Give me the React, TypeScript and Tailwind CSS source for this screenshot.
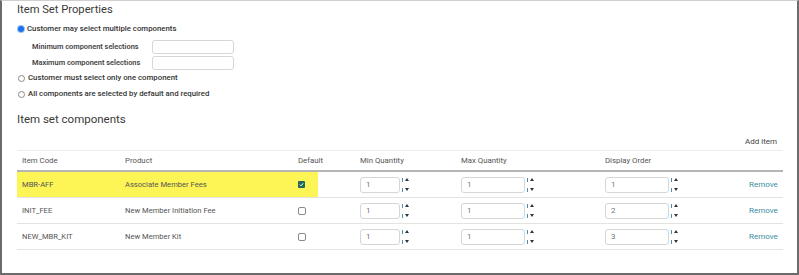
import React from "react";

const rows = [
  { code: "MBR-AFF", product: "Associate Member Fees", checked: true, min: "1", max: "1", order: "1" },
  { code: "INIT_FEE", product: "New Member Initiation Fee", checked: false, min: "1", max: "1", order: "2" },
  { code: "NEW_MBR_KIT", product: "New Member Kit", checked: false, min: "1", max: "1", order: "3" },
];

const cols = "grid grid-cols-[103px_173px_62px_101px_144px_144px_39px]";

function Radio({ on }: { on?: boolean }) {
  return on ? (
    <span className="w-[6px] h-[6px] rounded-full bg-[#1a73e8] ring-1 ring-[#9cc2f5] shrink-0" />
  ) : (
    <span className="w-[7px] h-[7px] rounded-full border border-[#888] bg-white shrink-0" />
  );
}

function Spin({ value, w }: { value: string; w: string }) {
  return (
    <div className="flex items-center gap-[2px]">
      <div className={`${w} h-[16px] border border-[#d6d6d6] rounded-[3px] bg-white flex items-center pl-[5px] text-[8px] text-[#777]`}>
        {value}
      </div>
      <div className="flex flex-col justify-between h-[16px] py-[1px]">
        <div className="flex items-center gap-[2px]">
          <span className="w-px h-[4px] bg-[#4a8fb0]" />
          <span className="w-0 h-0 border-l-[2px] border-r-[2px] border-b-[3px] border-l-transparent border-r-transparent border-b-[#333]" />
        </div>
        <div className="flex items-center gap-[2px]">
          <span className="w-px h-[4px] bg-[#4a8fb0]" />
          <span className="w-0 h-0 border-l-[2px] border-r-[2px] border-t-[3px] border-l-transparent border-r-transparent border-t-[#333]" />
        </div>
      </div>
    </div>
  );
}

export default function App() {
  return (
    <div
      className="w-[799px] h-[275px] bg-white border-l-2 border-r-2 border-b-2 border-t border-l-[#6b6b6b] border-r-[#6b6b6b] border-b-[#6b6b6b] border-t-[#cfcfcf] overflow-hidden text-[#333]"
      style={{ fontFamily: "Roboto, 'Noto Sans', sans-serif" }}
    >
      <div className="pl-[15px] pr-[14px]">
        {/* properties */}
        <h2 className="h-[18px] text-[11.2px] leading-[18px] text-[#3a3a3a] whitespace-nowrap">Item Set Properties</h2>
        <div className="mt-[2px] flex items-center gap-[3px] text-[7.8px] font-medium h-[16px] pl-[1px] whitespace-nowrap">
          <Radio on />
          <span>Customer may select multiple components</span>
        </div>
        <div className="pl-[15px] mt-[3px] flex flex-col gap-[2px]">
          <div className="flex items-center">
            <span className="w-[120px] text-[7.4px] font-semibold text-[#444] whitespace-nowrap">Minimum component selections</span>
            <div className="w-[82px] h-[14px] border border-[#d6d6d6] rounded-[3px]" />
          </div>
          <div className="flex items-center">
            <span className="w-[120px] text-[7.4px] font-semibold text-[#444] whitespace-nowrap">Maximum component selections</span>
            <div className="w-[82px] h-[14px] border border-[#d6d6d6] rounded-[3px]" />
          </div>
        </div>
        <div className="flex items-center gap-[3px] text-[7.8px] font-medium h-[16px] pl-[1px] whitespace-nowrap">
          <Radio />
          <span>Customer must select only one component</span>
        </div>
        <div className="flex items-center gap-[3px] text-[7.8px] font-medium h-[16px] pl-[1px] whitespace-nowrap">
          <Radio />
          <span>All components are selected by default and required</span>
        </div>

        {/* components */}
        <h3 className="mt-[8px] h-[18px] text-[11.5px] leading-[18px] text-[#3a3a3a] whitespace-nowrap">Item set components</h3>
        <div className="flex justify-end items-center pr-[6px] mt-[7px] h-[14px] text-[8px] text-[#444]">Add item</div>

        <div className="mt-[1px] w-[766px] border-t border-[#ececec] text-[7.6px] whitespace-nowrap">
          <div className={`${cols} h-[21px] items-center text-[#555] text-[7.8px] border-b-2 border-[#b5b5b5]`}>
            <span className="pl-[5px]">Item Code</span>
            <span className="pl-[5px]">Product</span>
            <span className="pl-[5px]">Default</span>
            <span className="pl-[5px]">Min Quantity</span>
            <span className="pl-[5px]">Max Quantity</span>
            <span className="pl-[5px]">Display Order</span>
            <span />
          </div>
          {rows.map((r, i) => (
            <div
              key={r.code}
              className={`${cols} h-[26px] items-center border-b border-[#e3e3e3] text-[#555] ${
                i === 0 ? "bg-[linear-gradient(to_right,#fdf456_301px,transparent_301px)]" : ""
              }`}
            >
              <span className="pl-[5px]">{r.code}</span>
              <span className="pl-[5px]">{r.product}</span>
              <span className="pl-[5px] flex">
                {r.checked ? (
                  <span className="w-[7px] h-[7px] rounded-[1px] bg-[#1f6b57] flex items-center justify-center">
                    <svg width="5" height="5" viewBox="0 0 6 6">
                      <path d="M1 3.2 L2.4 4.6 L5 1.6" stroke="#fff" strokeWidth="1.2" fill="none" />
                    </svg>
                  </span>
                ) : (
                  <span className="w-[8px] h-[8px] rounded-[2px] border border-[#8a8a8a] bg-white" />
                )}
              </span>
              <span className="pl-[5px]">
                <Spin value={r.min} w="w-[40px]" />
              </span>
              <span className="pl-[5px]">
                <Spin value={r.max} w="w-[64px]" />
              </span>
              <span className="pl-[5px]">
                <Spin value={r.order} w="w-[64px]" />
              </span>
              <span className="pl-[5px] text-[#3d8ea3] text-[8px]">Remove</span>
            </div>
          ))}
        </div>
      </div>
    </div>
  );
}
